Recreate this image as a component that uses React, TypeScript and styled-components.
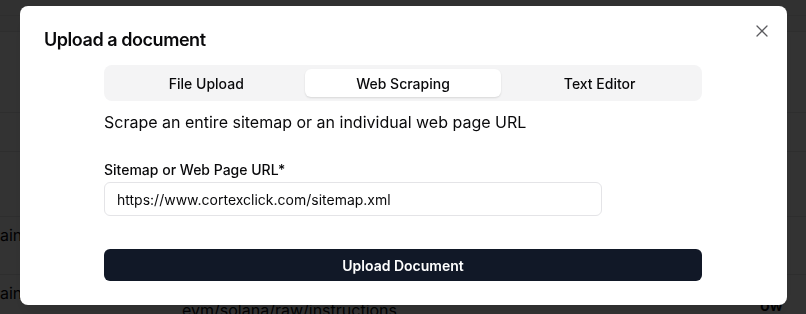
import * as React from 'react';
import { useState } from 'react';
import styled, { createGlobalStyle } from 'styled-components';
import { X } from 'lucide-react';

const GlobalStyle = createGlobalStyle`
  html, body {
    margin: 0;
    padding: 0;
    background: #ffffff;
    font-family: Inter, "Noto Sans", "Liberation Sans", sans-serif;
    color: #09090b;
  }
  * { box-sizing: border-box; }
`;

// page behind the dialog
const Page = styled.div`
  width: 806px;
  height: 314px;
  overflow: hidden;
  background: #ffffff;
`;

const PageRow = styled.div<{ $height: number; $shade?: boolean }>`
  display: flex;
  height: ${(p) => p.$height}px;
  border-bottom: 1px solid #e4e4e7;
  background: ${(p) => (p.$shade ? '#f4f4f5' : '#ffffff')};
  font-size: 16px;
  color: #09090b;
`;

const PageCell = styled.div<{ $width?: number; $top: number; $bold?: boolean }>`
  ${(p) => (p.$width ? `width: ${p.$width}px;` : 'flex: 1;')}
  padding-top: ${(p) => p.$top}px;
  font-weight: ${(p) => (p.$bold ? 600 : 400)};
  white-space: nowrap;
  overflow: hidden;
`;

// dialog
const Overlay = styled.div`
  position: fixed;
  inset: 0;
  background: rgba(0, 0, 0, 0.8);
  display: flex;
  justify-content: center;
  align-items: flex-start;
  padding-top: 6px;
  padding-left: 1px;
`;

const Dialog = styled.div`
  position: relative;
  width: 767px;
  background: #ffffff;
  border-radius: 8px;
  padding: 20px 24px 24px 24px;
  box-shadow: 0 10px 15px -3px rgba(0, 0, 0, 0.1);
`;

const Title = styled.h2`
  margin: 0;
  font-size: 18px;
  line-height: 28px;
  font-weight: 600;
  letter-spacing: -0.45px;
`;

const CloseButton = styled.button`
  position: absolute;
  top: 15px;
  right: 15px;
  width: 20px;
  height: 20px;
  padding: 0;
  border: 0;
  background: none;
  color: #5b5b5f;
  display: flex;
  align-items: center;
  justify-content: center;
  cursor: pointer;

  svg {
    flex-shrink: 0;
  }
`;

const Body = styled.div`
  width: 598px;
  margin: 11px 0 0 60px;
`;

const TabList = styled.div`
  display: grid;
  grid-template-columns: repeat(3, 1fr);
  padding: 4px;
  height: 36px;
  background: #f4f4f5;
  border-radius: 8px;
`;

const Tab = styled.button<{ $active: boolean }>`
  height: 28px;
  border: 0;
  border-radius: 6px;
  font-family: inherit;
  font-size: 14px;
  font-weight: 500;
  color: #09090b;
  background: ${(p) => (p.$active ? '#ffffff' : 'transparent')};
  box-shadow: ${(p) => (p.$active ? '0 1px 2px rgba(0, 0, 0, 0.12)' : 'none')};
  cursor: pointer;
`;

const Description = styled.p`
  margin: 9px 0 0;
  font-size: 16px;
  line-height: 24px;
`;

const Label = styled.label`
  display: block;
  margin-top: 26px;
  font-size: 14px;
  line-height: 20px;
  font-weight: 500;
`;

const Input = styled.input`
  display: block;
  margin-top: 2px;
  width: 498px;
  height: 34px;
  padding: 0 12px;
  border: 1px solid #e4e4e7;
  border-radius: 6px;
  font-family: inherit;
  font-size: 14px;
  color: #09090b;
  outline: none;
`;

const SubmitButton = styled.button`
  display: block;
  margin-top: 33px;
  width: 100%;
  height: 32px;
  border: 0;
  border-radius: 6px;
  background: #111827;
  color: #ffffff;
  font-family: inherit;
  font-size: 14px;
  font-weight: 600;
  cursor: pointer;
`;

const tabs = ['File Upload', 'Web Scraping', 'Text Editor'];

const App = () => {
  const [active, setActive] = useState('Web Scraping');
  const [url, setUrl] = useState('https://www.cortexclick.com/sitemap.xml');

  return (
    <>
      <GlobalStyle />
      <Page>
        <PageRow $height={16} $shade />
        <PageRow $height={16} $shade />
        <PageRow $height={81} />
        <PageRow $height={39} />
        <PageRow $height={65} />
        <PageRow $height={58}>
          <PageCell $width={182} $top={8}>ain</PageCell>
        </PageRow>
        <PageRow $height={60}>
          <PageCell $width={182} $top={8}>ain</PageCell>
          <PageCell $top={25}>evm/solana/raw/instructions</PageCell>
          <PageCell $width={46} $top={20} $bold>ow</PageCell>
        </PageRow>
      </Page>
      <Overlay>
        <Dialog role="dialog">
          <Title>Upload a document</Title>
          <CloseButton aria-label="Close">
            <X size={20} strokeWidth={1.5} />
          </CloseButton>
          <Body>
            <TabList>
              {tabs.map((t) => (
                <Tab key={t} $active={active === t} onClick={() => setActive(t)}>
                  {t}
                </Tab>
              ))}
            </TabList>
            <Description>Scrape an entire sitemap or an individual web page URL</Description>
            <Label htmlFor="url">Sitemap or Web Page URL*</Label>
            <Input id="url" value={url} onChange={(e) => setUrl(e.target.value)} />
            <SubmitButton>Upload Document</SubmitButton>
          </Body>
        </Dialog>
      </Overlay>
    </>
  );
};

export default App;
